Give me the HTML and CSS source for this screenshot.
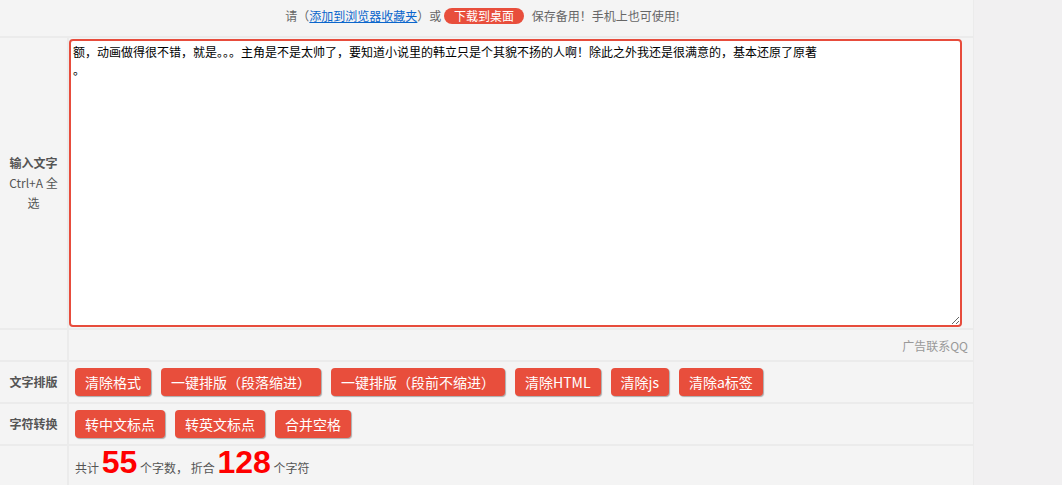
FILE: index.html
```html
<!DOCTYPE html>
<html lang="zh-CN">
<head>
<meta charset="utf-8">
<title>文字排版工具</title>
<link rel="stylesheet" href="styles.css">
</head>
<body>
<div class="board">
  <div class="cell notice">请（<a class="fav" href="#">添加到浏览器收藏夹</a>）或 <span class="dl">下载到桌面</span> 保存备用！手机上也可使用!</div>

  <div class="cell label"><b>输入文字</b><span>Ctrl+A 全选</span></div>
  <div class="cell editor">
    <textarea class="input">额，动画做得很不错，就是。。。主角是不是太帅了，要知道小说里的韩立只是个其貌不扬的人啊！除此之外我还是很满意的，基本还原了原著
。</textarea>
  </div>

  <div class="cell label"></div>
  <div class="cell ad">广告联系QQ</div>

  <div class="cell label"><b>文字排版</b></div>
  <div class="cell tools">
    <button class="btn">清除格式</button>
    <button class="btn">一键排版（段落缩进）</button>
    <button class="btn">一键排版（段前不缩进）</button>
    <button class="btn">清除HTML</button>
    <button class="btn">清除js</button>
    <button class="btn">清除a标签</button>
  </div>

  <div class="cell label"><b>字符转换</b></div>
  <div class="cell tools">
    <button class="btn">转中文标点</button>
    <button class="btn">转英文标点</button>
    <button class="btn">合并空格</button>
  </div>

  <div class="cell label"></div>
  <div class="cell stats">共计 <span class="num">55</span> 个字数， 折合 <span class="num">128</span> 个字符</div>
</div>
</body>
</html>
```

FILE: styles.css
```css
* { box-sizing: border-box; }

body {
  margin: 0;
  background: #f1f0f1;
  font-family: "Noto Sans CJK SC", "Liberation Sans", sans-serif;
  font-size: 12px;
  color: #555;
}

.board {
  width: 974px;
  display: grid;
  grid-template-columns: 67px 1fr;
  grid-template-rows: 36px 290px 30px 40px 40px 40px;
  gap: 2px;
  padding-right: 1px;
  background: #ebebeb;
}

.cell {
  background: #f4f4f4;
}

.notice {
  grid-column: 1 / 3;
  padding-right: 8px;
  text-align: center;
  line-height: 32px;
  color: #666;
}

.fav {
  color: #0a66cc;
  text-decoration: underline;
}

.dl {
  display: inline-block;
  height: 16px;
  line-height: 16px;
  padding: 0 10px;
  margin-right: 5px;
  background: #e84e3c;
  color: #fff;
  border-radius: 8px;
}

.label {
  display: flex;
  flex-direction: column;
  align-items: center;
  justify-content: center;
  padding: 0 6px;
  text-align: center;
  line-height: 20px;
  color: #555;
}

.label b { font-weight: bold; }

.editor {
  padding: 1px 0;
}

.input {
  display: block;
  width: 893px;
  height: 288px;
  margin: 0;
  border: 2px solid #e74c3c;
  border-radius: 4px;
  padding: 2px;
  background: #fff;
  color: #000;
  font-family: "Noto Sans CJK SC", "Liberation Sans", sans-serif;
  font-size: 12px;
  line-height: 18px;
  outline: none;
}

.ad {
  display: flex;
  align-items: center;
  justify-content: flex-end;
  padding-right: 5px;
  color: #999;
}

.tools {
  display: flex;
  align-items: center;
  gap: 10px;
  padding-left: 6px;
}

.btn {
  height: 28px;
  padding: 0 10px;
  border: none;
  border-radius: 4px;
  background: #e84e3c;
  color: #fff;
  font-family: "Noto Sans CJK SC", "Liberation Sans", sans-serif;
  font-size: 14px;
  line-height: 28px;
  box-shadow: 1px 1px 1px rgba(0, 0, 0, 0.3);
  cursor: pointer;
}

.stats {
  padding-left: 6px;
  line-height: 32px;
  color: #555;
  white-space: nowrap;
}

.num {
  font-family: "Liberation Sans", sans-serif;
  font-size: 32px;
  font-weight: bold;
  color: #ff0000;
}
```
